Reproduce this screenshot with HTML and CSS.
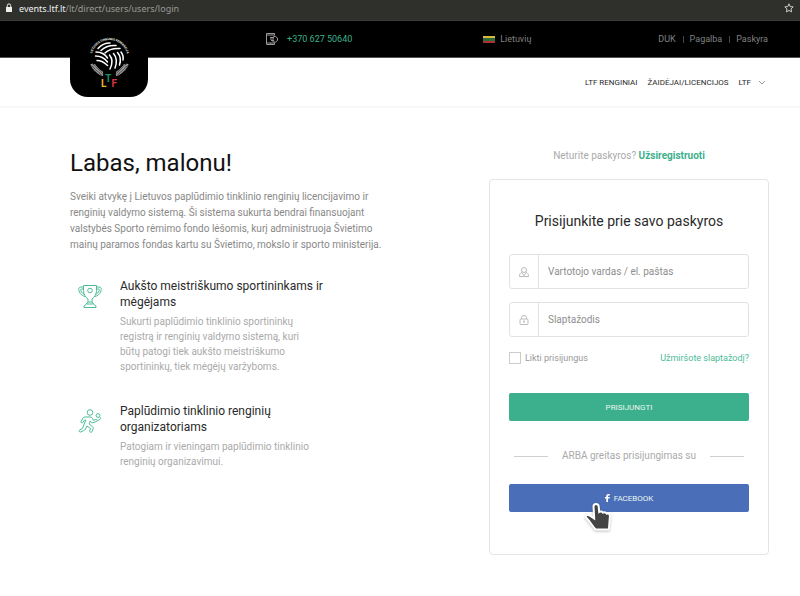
FILE: index.html
```html
<!DOCTYPE html>
<html lang="lt">
<head>
<meta charset="utf-8">
<meta name="viewport" content="width=device-width, initial-scale=1">
<title>LTF – Prisijungimas</title>
<link rel="stylesheet" href="styles.css">
</head>
<body>
<div class="address-bar">
  <svg class="address-lock" viewBox="0 0 8 10" aria-hidden="true"><path d="M1 4h6v5H1z" fill="#eee"/><path d="M2.300 4V2.600a1.700 1.700 0 0 1 3.400 0V4" fill="none" stroke="#eee"/></svg>
  <span class="address"><b>events.ltf.lt</b>/lt/direct/users/users/login</span>
  <svg class="address-star" viewBox="0 0 10 10" aria-hidden="true"><path d="M5 .8l1.200 2.800 3 .3L7 5.900l.6 3L5 7.400 2.400 8.900l.6-3L.8 3.900l3-.3z"/></svg>
</div>

<header class="header">
  <div class="topbar">
    <a class="phone" href="tel:+37062750640">
      <svg class="phone-icon" viewBox="0 0 12 12" aria-hidden="true"><path d="M8.500 2.500V.5h-8v11h8v-2M.5 2h8M.5 10h8M3.500 11h2M7.500 3.500h2l2 1.500v2.500l-2 1.500h-2l-2-2M4 4.500h4M4 6h4M5 7.500h3"/></svg>
      +370 627 50640
    </a>
    <a class="language" href="#">
      <span class="flag" aria-hidden="true"></span>
      Lietuvių
    </a>
    <nav class="account">
      <a href="#">DUK</a>
      <a href="#">Pagalba</a>
      <a href="#">Paskyra</a>
    </nav>
  </div>
  <nav class="mainnav">
    <a href="#">LTF RENGINIAI</a>
    <a href="#">ŽAIDĖJAI/LICENCIJOS</a>
    <a class="has-menu" href="#">LTF
      <svg class="chevron" viewBox="0 0 8 5" aria-hidden="true"><path d="M1 1l3 3 3-3"/></svg>
    </a>
  </nav>
  <a class="logo" href="#" aria-label="Lietuvos tinklinio federacija">
    <svg viewBox="0 0 44 56" aria-hidden="true">
      <defs><path id="arc" d="M4.500 26A18 18 0 1 1 40.500 26"/></defs>
      <text class="logo-ring"><textPath href="#arc" startOffset="50%" text-anchor="middle">LIETUVOS TINKLINIO FEDERACIJA</textPath></text>
      <g fill="none" stroke="#fff" stroke-width="1.500" stroke-linecap="round">
        <path d="M11 16.500c3-3.500 7-5.500 12-5.500M14 18.500c4-4 9-5.500 15-5M18 21c4-4 9-5 15-4.500"/>
        <path d="M9 20c5 0 9 2 11.500 6M8.500 24c5 0 9 2 12 6M10 28.500c4 0 7.500 2 10.500 5"/>
        <path d="M22.500 23c3 3.500 3 9 .5 14M26.500 21.500c3.500 4 3.500 9 1.500 14.500M30.500 20.500c3 3.500 3.500 8 2 12.500M34 20c2 2.500 2.500 5 2 8"/>
      </g>
      <g fill="none" stroke="#aaa" stroke-width="2.500" stroke-dasharray="1 .4">
        <path d="M4.500 32c2 5 6 9 11.500 11M7 32.500c2 3.500 5 6.500 9 8.500"/>
        <path d="M40.500 32c-2 5-6 9-11.500 11M38 32.500c-2 3.500-5 6.500-9 8.500"/>
      </g>
      <text class="logo-letters" x="14" y="55"><tspan fill="#eeb32b">L</tspan><tspan fill="#15906a" dy="-5">T</tspan><tspan fill="#d9373d" dy="5">F</tspan></text>
    </svg>
  </a>
</header>

<main class="main">
  <section class="about">
    <h1>Labas, malonu!</h1>
    <p class="intro">Sveiki atvykę į Lietuvos paplūdimio tinklinio renginių licencijavimo ir renginių valdymo sistemą. Ši sistema sukurta bendrai finansuojant valstybės Sporto rėmimo fondo lėšomis, kurį administruoja Švietimo mainų paramos fondas kartu su Švietimo, mokslo ir sporto ministerija.</p>
    <article class="feature">
      <svg class="feature-icon" viewBox="0 0 24 24" aria-hidden="true"><path d="M5.500 1.500h13v5c0 4-2 6.500-4.500 8.500v3l1.500 2h-7l1.500-2v-3C7.500 13 5.500 10.500 5.500 6.500zM5.500 3H3C.5 3 .5 5 1 7c1 3.500 4 5 6 5.500M18.500 3H21c2.500 0 2.500 2 2 4-1 3.500-4 5-6 5.500M5.500 5H3.500C2.500 5 2.700 6 3 7c.6 1.800 2 2.700 3.200 3.200M18.500 5h2c1 0 .8 1 .5 2-.6 1.800-2 2.700-3.200 3.200M8.500 20 6 22v1.500h12V22l-2.500-2M10 18h4"/><circle cx="12" cy="6.500" r="2.300"/></svg>
      <div class="feature-body">
        <h2>Aukšto meistriškumo sportininkams ir mėgėjams</h2>
        <p>Sukurti paplūdimio tinklinio sportininkų registrą ir renginių valdymo sistemą, kuri būtų patogi tiek aukšto meistriškumo sportininkų, tiek mėgėjų varžyboms.</p>
      </div>
    </article>
    <article class="feature">
      <svg class="feature-icon" viewBox="0 0 24 24" aria-hidden="true"><circle cx="12" cy="3.500" r="2.800"/><circle cx="20" cy="6.500" r="1.900"/><path d="M7 8h5c1.500 0 2.300.7 2.700 1.800l.6 1.500 2.500-.8c1.500-.3 2 1.500.7 2l-3.800 1.300c-.8.200-1.300 0-1.700-.7l-.6-1.100-1.300 3 3.400 2.700c.8.700 1 1.400.6 2.300l-1.300 2.800c-.7 1.200-2.500.5-2.100-.9l.9-2.400-3.700-2.500-1.400 3c-.5 1-1.100 1.400-2 1.700l-2.800 1.300c-1.500.5-2.300-1.500-.8-2.200l2.600-1.300 3.300-8.500H6.500l-1.700 2.500c-.9 1-2.300.1-1.800-1.100L5 9c.5-.7 1.100-1 2-1zM19 12l2.800-1.500c1-.8.800-1.800.2-2.500"/></svg>
      <div class="feature-body">
        <h2>Paplūdimio tinklinio renginių organizatoriams</h2>
        <p>Patogiam ir vieningam paplūdimio tinklinio renginių organizavimui.</p>
      </div>
    </article>
  </section>

  <section class="login">
    <p class="register">Neturite paskyros? <a href="#">Užsiregistruoti</a></p>
    <form class="card">
      <h2>Prisijunkite prie savo paskyros</h2>
      <div class="field">
        <label for="username" aria-label="Vartotojo vardas"><svg viewBox="0 0 10 10" aria-hidden="true"><circle cx="5" cy="3" r="2.500"/><path d="M3.500 5C1.500 5.500.5 7 .5 9.500h9C9.500 7 8.500 5.500 6.500 5M3 6l2 2.500L7 6M5 8.500v1"/></svg></label>
        <input id="username" type="text" placeholder="Vartotojo vardas / el. paštas">
      </div>
      <div class="field">
        <label for="password" aria-label="Slaptažodis"><svg viewBox="0 0 10 10" aria-hidden="true"><rect x="1" y="4" width="8" height="5.500" rx="1"/><path d="M2.500 4V2.500a2.500 2 0 0 1 5 0V4M5 5.500v2.500M4.300 6.200h1.400"/></svg></label>
        <input id="password" type="password" placeholder="Slaptažodis">
      </div>
      <div class="options">
        <label class="remember"><input type="checkbox"> Likti prisijungus</label>
        <a href="#">Užmiršote slaptažodį?</a>
      </div>
      <button class="button" type="submit">PRISIJUNGTI</button>
      <p class="divider">ARBA greitas prisijungimas su</p>
      <button class="button facebook" type="button">
        <svg class="facebook-icon" viewBox="0 0 5 8" aria-hidden="true"><path d="M1.300 8V4.500H0V3h1.300V2C1.300.7 2 0 3.300 0H4.800v1.500H3.800C3.200 1.500 3 1.700 3 2.200V3h1.800L4.500 4.500H3V8z"/></svg>
        FACEBOOK
        <svg class="pointer" viewBox="0 0 28 32" aria-hidden="true"><path d="M9.500 4.500c0-3.500 5-3.500 5.200 0l.5 5.500c1.500-1 3-.5 3.800.7 1.500-.7 3-.2 3.700 1 2-.5 3.300.5 3.200 2.500l-1 13.300H11.500C8.500 24 6 19.500 2 15.500c-1-2 1.500-3.500 4-1.800l4.200 2.800z"/></svg>
      </button>
    </form>
  </section>
</main>
</body>
</html>
```

FILE: styles.css
```css
* {
  box-sizing: border-box;
}

body {
  margin: 0;
  background: #fff;
  color: #2a2a2a;
  font-family: Roboto, "Noto Sans", sans-serif;
  font-size: 10px;
}

h1, h2, p {
  margin: 0;
  font-weight: 400;
}

a {
  color: inherit;
  text-decoration: none;
}

/* Address bar */
.address-bar {
  display: flex;
  align-items: center;
  height: 21px;
  padding: 0 6px 4px 5px;
  border-bottom: 1px solid #3a3b37;
  background: #2f302c;
  color: #999994;
  font-family: "Noto Sans", sans-serif;
  font-size: 9px;
}

.address-lock {
  width: 8px;
  height: 10px;
  margin-right: 6px;
}

.address {
  flex: 1;
}

.address b {
  color: #eee;
  font-weight: 400;
}

.address-star {
  width: 10px;
  height: 10px;
  fill: none;
  stroke: #ccc;
}

/* Header */
.header {
  position: relative;
  border-bottom: 2px solid #f7f7f7;
}

.topbar {
  display: grid;
  grid-template-columns: 196fr 217fr 175fr auto;
  align-items: center;
  height: 37px;
  padding: 0 32px 0 70px;
  border-bottom: 1px solid #555;
  background: #000;
  color: #808080;
  font-size: 9px;
}

.phone {
  display: flex;
  grid-column: 2;
  gap: 9px;
  align-items: center;
  color: #3cb08c;
}

.phone-icon {
  width: 12px;
  height: 12px;
  fill: none;
  stroke: #999;
}

.language {
  display: flex;
  gap: 5px;
  align-items: center;
}

.flag {
  width: 12px;
  height: 7px;
  background: linear-gradient(#d9b83c 33%, #2f6b3a 33% 67%, #a83232 67%);
}

.account {
  display: flex;
}

.account a + a {
  margin-left: 7px;
  padding-left: 7px;
  background: linear-gradient(#444, #444) left center / 1px 7px no-repeat;
}

.mainnav {
  display: flex;
  gap: 10px;
  align-items: center;
  justify-content: flex-end;
  height: 48px;
  padding: 0 34px 0 160px;
  font-size: 8px;
}

.has-menu {
  display: flex;
  gap: 7px;
  align-items: center;
}

.chevron {
  width: 8px;
  height: 5px;
  fill: none;
  stroke: #999;
}

.logo {
  position: absolute;
  top: 0;
  left: 70px;
  width: 78px;
  height: 76px;
  padding: 11px 17px 0;
  border-radius: 0 0 18px 18px;
  background: #000;
}

.logo svg {
  display: block;
  overflow: visible;
  width: 44px;
  height: 56px;
}

.logo-ring {
  fill: #fff;
  font-size: 3px;
  font-weight: 700;
}

.logo-letters {
  font-size: 10px;
  font-weight: 700;
}

/* Page columns */
.main {
  display: grid;
  grid-template-columns: 1fr 280px;
  gap: 90px;
  padding: 39px 31px 41px 70px;
}

h1 {
  font-size: 24px;
  line-height: 32px;
  color: #111;
}

.intro {
  margin-top: 10px;
  color: #888;
  line-height: 16px;
}

.feature {
  display: flex;
  gap: 18px;
  max-width: 260px;
  margin-top: 29px;
  padding-left: 8px;
}

.intro + .feature {
  margin-top: 25px;
}

.feature-icon {
  flex: none;
  width: 24px;
  height: 24px;
  margin-top: 6px;
  fill: none;
  stroke: #4dbb98;
}

.feature h2 {
  font-size: 12px;
  line-height: 16px;
}

.feature p {
  max-width: 198px;
  margin-top: 4px;
  color: #aaa;
  line-height: 15px;
}

/* Login */
.register {
  margin-top: 1px;
  color: #aaa;
  line-height: 16px;
  text-align: center;
}

.register a {
  color: #3cb08c;
  font-weight: 700;
}

.card {
  margin-top: 15px;
  padding: 31px 19px 42px;
  border: 1px solid #e4e4e4;
  border-radius: 4px;
}

.card h2 {
  margin-bottom: 23px;
  font-size: 14px;
  line-height: 20px;
  text-align: center;
}

.field {
  display: flex;
  height: 35px;
  margin-bottom: 13px;
  border: 1px solid #e2e2e2;
  border-radius: 3px;
}

.field label {
  display: flex;
  flex: none;
  align-items: center;
  justify-content: center;
  width: 29px;
  border-right: 1px solid #e2e2e2;
}

.field svg {
  width: 10px;
  height: 10px;
  fill: none;
  stroke: #bbb;
}

.field input {
  flex: 1;
  min-width: 0;
  padding: 0 9px;
  border: 0;
  background: none;
  color: #333;
  font: inherit;
}

.field input::placeholder {
  color: #8e8e8e;
}

.options {
  display: flex;
  align-items: center;
  justify-content: space-between;
  height: 16px;
  color: #999;
  font-size: 9px;
}

.options a {
  color: #4dbb98;
}

.remember {
  display: flex;
  gap: 4px;
  align-items: center;
}

.remember input {
  width: 12px;
  height: 12px;
  margin: 0;
  border: 1px solid #ccc;
  appearance: none;
}

.remember input:checked {
  background: #3cb08c;
}

.button {
  position: relative;
  display: flex;
  gap: 4px;
  align-items: center;
  justify-content: center;
  width: 100%;
  height: 28px;
  margin-top: 27px;
  padding: 0;
  border: 0;
  border-radius: 2px;
  background: #3cb08c;
  color: #e9f5f1;
  font: inherit;
  font-size: 8px;
}

.divider {
  display: flex;
  gap: 14px;
  align-items: center;
  margin-top: 27px;
  padding: 0 5px;
  color: #aaa;
  line-height: 16px;
}

.divider::before,
.divider::after {
  flex: 1;
  height: 1px;
  background: #d0d0d0;
  content: "";
}

.facebook {
  margin-top: 20px;
  background: #4a6fb8;
}

.facebook-icon {
  width: 5px;
  height: 8px;
  fill: #fff;
}

.pointer {
  position: absolute;
  top: 18px;
  left: 75px;
  width: 28px;
  height: 32px;
  fill: #444;
  stroke: #fff;
  stroke-width: 2px;
  filter: drop-shadow(0 1px 1px rgb(0 0 0 / 25%));
}
```
